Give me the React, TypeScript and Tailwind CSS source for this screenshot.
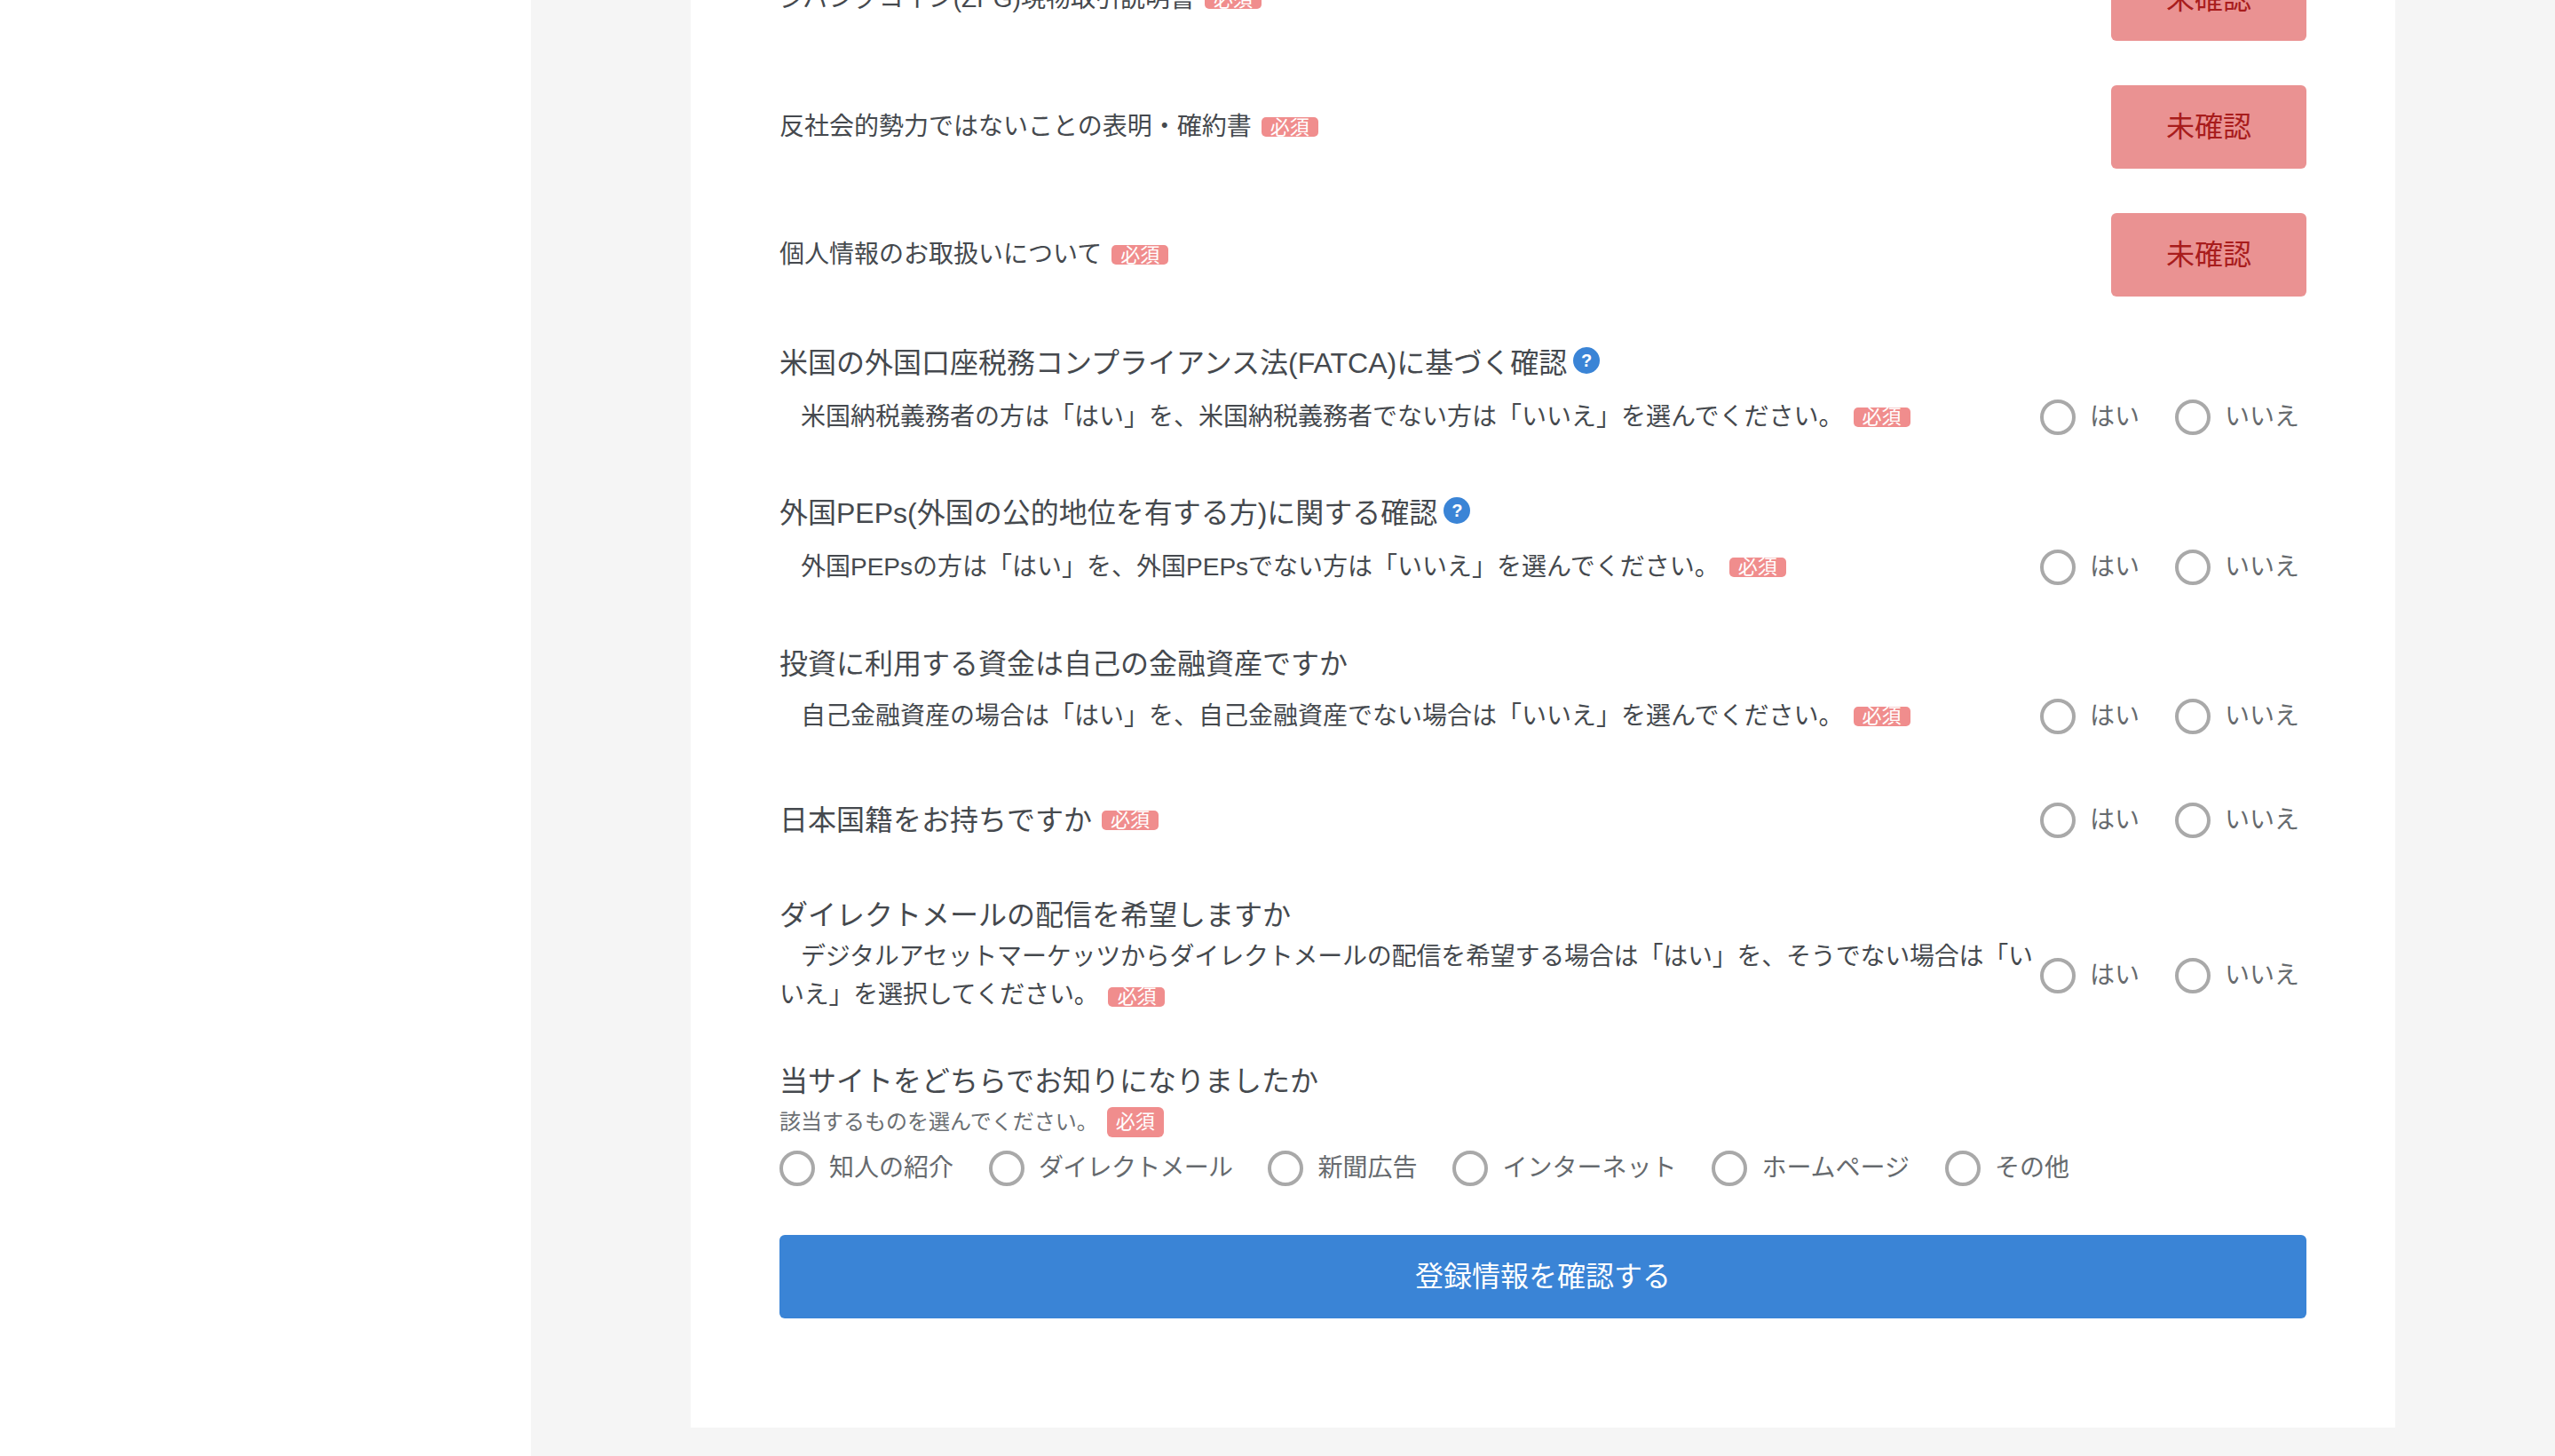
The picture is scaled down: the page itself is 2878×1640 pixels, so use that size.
// App.tsx = Account registration form, lower part of the confirmation page.
const FONT = "font-['Liberation_Sans','Noto_Sans_CJK_JP',sans-serif]";

const Badge = ({ tall = false }: { tall?: boolean }) => (
    <span
        className={`inline-flex w-[64px] shrink-0 items-center justify-center overflow-hidden bg-[#f08d8d] text-[22px] text-white ${
            tall ? "h-[34px] rounded-[6px]" : "h-[22px] rounded-[5px]"
        }`}
    >
        必須
    </span>
);

const HelpIcon = () => (
    <span className="ml-[7px] mb-[6px] inline-flex h-[30px] w-[30px] shrink-0 items-center justify-center rounded-full bg-[#3a84d6] text-[20px] font-bold text-white">
        ?
    </span>
);

const Radio = ({ label, tight = false }: { label: string; tight?: boolean }) => (
    <label className="flex items-center gap-[16px] text-[28px] leading-[40px] text-[#666a6e]">
        <span className="h-[40px] w-[40px] shrink-0 rounded-full border-[4px] border-[#a9a9a9] bg-white" />
        <span className={`whitespace-nowrap ${tight ? "tracking-[-0.7px]" : ""}`}>{label}</span>
    </label>
);

const YesNo = () => (
    <div className="flex w-[300px] shrink-0 items-center gap-[40px]">
        <Radio label="はい" />
        <Radio label="いいえ" />
    </div>
);

const DocRow = ({ title, className = "" }: { title: string; className?: string }) => (
    <div className={`flex h-[94px] items-center justify-between ${className}`}>
        <div className="flex items-center gap-[11px] text-[28px] text-[#45494e]">
            <span>{title}</span>
            <Badge />
        </div>
        <button className="flex h-[94px] w-[220px] items-center justify-center rounded-[6px] bg-[#ea9292] text-[32px] text-[#a81c1c]">
            未確認
        </button>
    </div>
);

const Question = ({
    title,
    note,
    help = false,
    className = "",
    noteGap = "mt-[15px]",
}: {
    title: string;
    note: string;
    help?: boolean;
    className?: string;
    noteGap?: string;
}) => (
    <div className={className}>
        <h3 className="flex items-center text-[32px] leading-[48px] text-[#45494e]">
            {title}
            {help && <HelpIcon />}
        </h3>
        <div className={`${noteGap} flex items-center`}>
            <div className="flex flex-1 items-center gap-[11px] text-[28px] leading-[43px] text-[#45494e]">
                <p className="indent-[24px]">{note}</p>
                <Badge />
            </div>
            <YesNo />
        </div>
    </div>
);

const SOURCES = ["知人の紹介", "ダイレクトメール", "新聞広告", "インターネット", "ホームページ", "その他"];

export default function App() {
    return (
        <div className={`flex h-[1640px] w-[2878px] overflow-hidden bg-white ${FONT}`}>
            <aside className="w-[598px] shrink-0 bg-white" />
            <main className="flex-1 bg-[#f5f5f5] px-[180px]">
                {/* page is scrolled, the card starts above the top edge */}
                <div className="mt-[-48px] h-[1656px] bg-white px-[100px]">
                    <DocRow title="ジパングコイン(ZPG)現物取引説明書" />
                    <DocRow title="反社会的勢力ではないことの表明・確約書" className="mt-[50px]" />
                    <DocRow title="個人情報のお取扱いについて" className="mt-[50px]" />

                    <Question
                        className="mt-[51px]"
                        title="米国の外国口座税務コンプライアンス法(FATCA)に基づく確認"
                        note="米国納税義務者の方は「はい」を、米国納税義務者でない方は「いいえ」を選んでください。"
                        help
                    />
                    <Question
                        className="mt-[63px]"
                        title="外国PEPs(外国の公的地位を有する方)に関する確認"
                        note="外国PEPsの方は「はい」を、外国PEPsでない方は「いいえ」を選んでください。"
                        help
                    />
                    <Question
                        className="mt-[64px]"
                        noteGap="mt-[13px]"
                        title="投資に利用する資金は自己の金融資産ですか"
                        note="自己金融資産の場合は「はい」を、自己金融資産でない場合は「いいえ」を選んでください。"
                    />

                    <div className="mt-[72px] flex items-center">
                        <div className="flex flex-1 items-center gap-[11px] text-[32px] leading-[48px] text-[#45494e]">
                            <span>日本国籍をお持ちですか</span>
                            <Badge />
                        </div>
                        <YesNo />
                    </div>

                    <div className="mt-[59px]">
                        <h3 className="text-[32px] leading-[48px] text-[#45494e]">ダイレクトメールの配信を希望しますか</h3>
                        <div className="mt-[1px] flex items-center">
                            <p className="flex-1 indent-[24px] text-[28px] leading-[43px] tracking-[-0.22px] text-[#45494e]">
                                デジタルアセットマーケッツからダイレクトメールの配信を希望する場合は「はい」を、そうでない場合は「いいえ」を選択してください。
                                <span className="ml-[11px] inline-flex indent-0 align-middle">
                                    <Badge />
                                </span>
                            </p>
                            <YesNo />
                        </div>
                    </div>

                    <div className="mt-[52px]">
                        <h3 className="text-[32px] leading-[48px] text-[#45494e]">当サイトをどちらでお知りになりましたか</h3>
                        <div className="mt-[4px] flex items-center gap-[10px] text-[24px] leading-[36px] text-[#6b6f73]">
                            <span>該当するものを選んでください。</span>
                            <Badge tall />
                        </div>
                        <div className="mt-[14px] flex items-center gap-[40px]">
                            {SOURCES.map((source) => (
                                <Radio key={source} label={source} tight={source === "ダイレクトメール"} />
                            ))}
                        </div>
                    </div>

                    <button className="mt-[55px] flex h-[94px] w-full items-center justify-center rounded-[6px] bg-[#3a84d6] text-[32px] text-white">
                        登録情報を確認する
                    </button>
                </div>
            </main>
        </div>
    );
}
